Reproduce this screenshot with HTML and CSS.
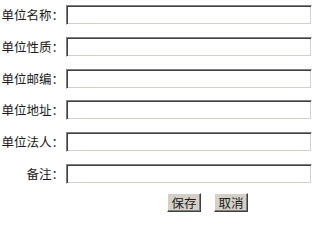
FILE: index.html
```html
<!DOCTYPE html>
<html lang="zh-CN">
<head>
<meta charset="utf-8">
<link rel="stylesheet" href="styles.css">
</head>
<body>
<form class="form">
  <label class="label">单位名称<span class="colon">：</span></label><input class="field" type="text">
  <label class="label">单位性质<span class="colon">：</span></label><input class="field" type="text">
  <label class="label">单位邮编<span class="colon">：</span></label><input class="field" type="text">
  <label class="label">单位地址<span class="colon">：</span></label><input class="field" type="text">
  <label class="label">单位法人<span class="colon">：</span></label><input class="field" type="text">
  <label class="label">备注<span class="colon">：</span></label><input class="field" type="text">
  <div class="actions">
    <button class="btn" type="button">保存</button>
    <button class="btn" type="button">取消</button>
  </div>
</form>
</body>
</html>
```
FILE: styles.css
```css
html, body {
  margin: 0;
  padding: 0;
  background: #ffffff;
}
body {
  font-family: "Noto Sans CJK SC", "Noto Sans", sans-serif;
  font-size: 12.5px;
  color: #000000;
}
.form {
  display: grid;
  grid-template-columns: 64px 246px;
  column-gap: 2px;
  row-gap: 11.8px;
  padding-top: 5px;
  align-items: center;
}
.label {
  text-align: right;
  line-height: 20px;
  white-space: nowrap;
  color: #1a1a1a;
}
.colon {
  font-family: "Noto Sans CJK JP", "Noto Sans CJK TC", sans-serif;
}
.field {
  box-sizing: border-box;
  width: 246px;
  height: 20px;
  margin: 0;
  padding: 0 3px;
  border: 1px solid;
  border-color: #808080 #ffffff #ffffff #808080;
  box-shadow: inset 1px 1px 0 #404040, inset -1px -1px 0 #d4d0c8;
  background: #ffffff;
  outline: none;
}
.actions {
  grid-column: 2;
  display: flex;
  gap: 13px;
  padding-left: 101px;
  margin-top: -2.8px;
}
.btn {
  box-sizing: border-box;
  width: 34px;
  height: 19px;
  margin: 0;
  padding: 0;
  font-family: "Noto Sans CJK SC", sans-serif;
  font-size: 12.5px;
  line-height: 15px;
  color: #1a1a1a;
  background: #d4d0c8;
  border: 1px solid;
  border-color: #ffffff #404040 #404040 #ffffff;
  box-shadow: inset -1px -1px 0 #808080;
}
```
